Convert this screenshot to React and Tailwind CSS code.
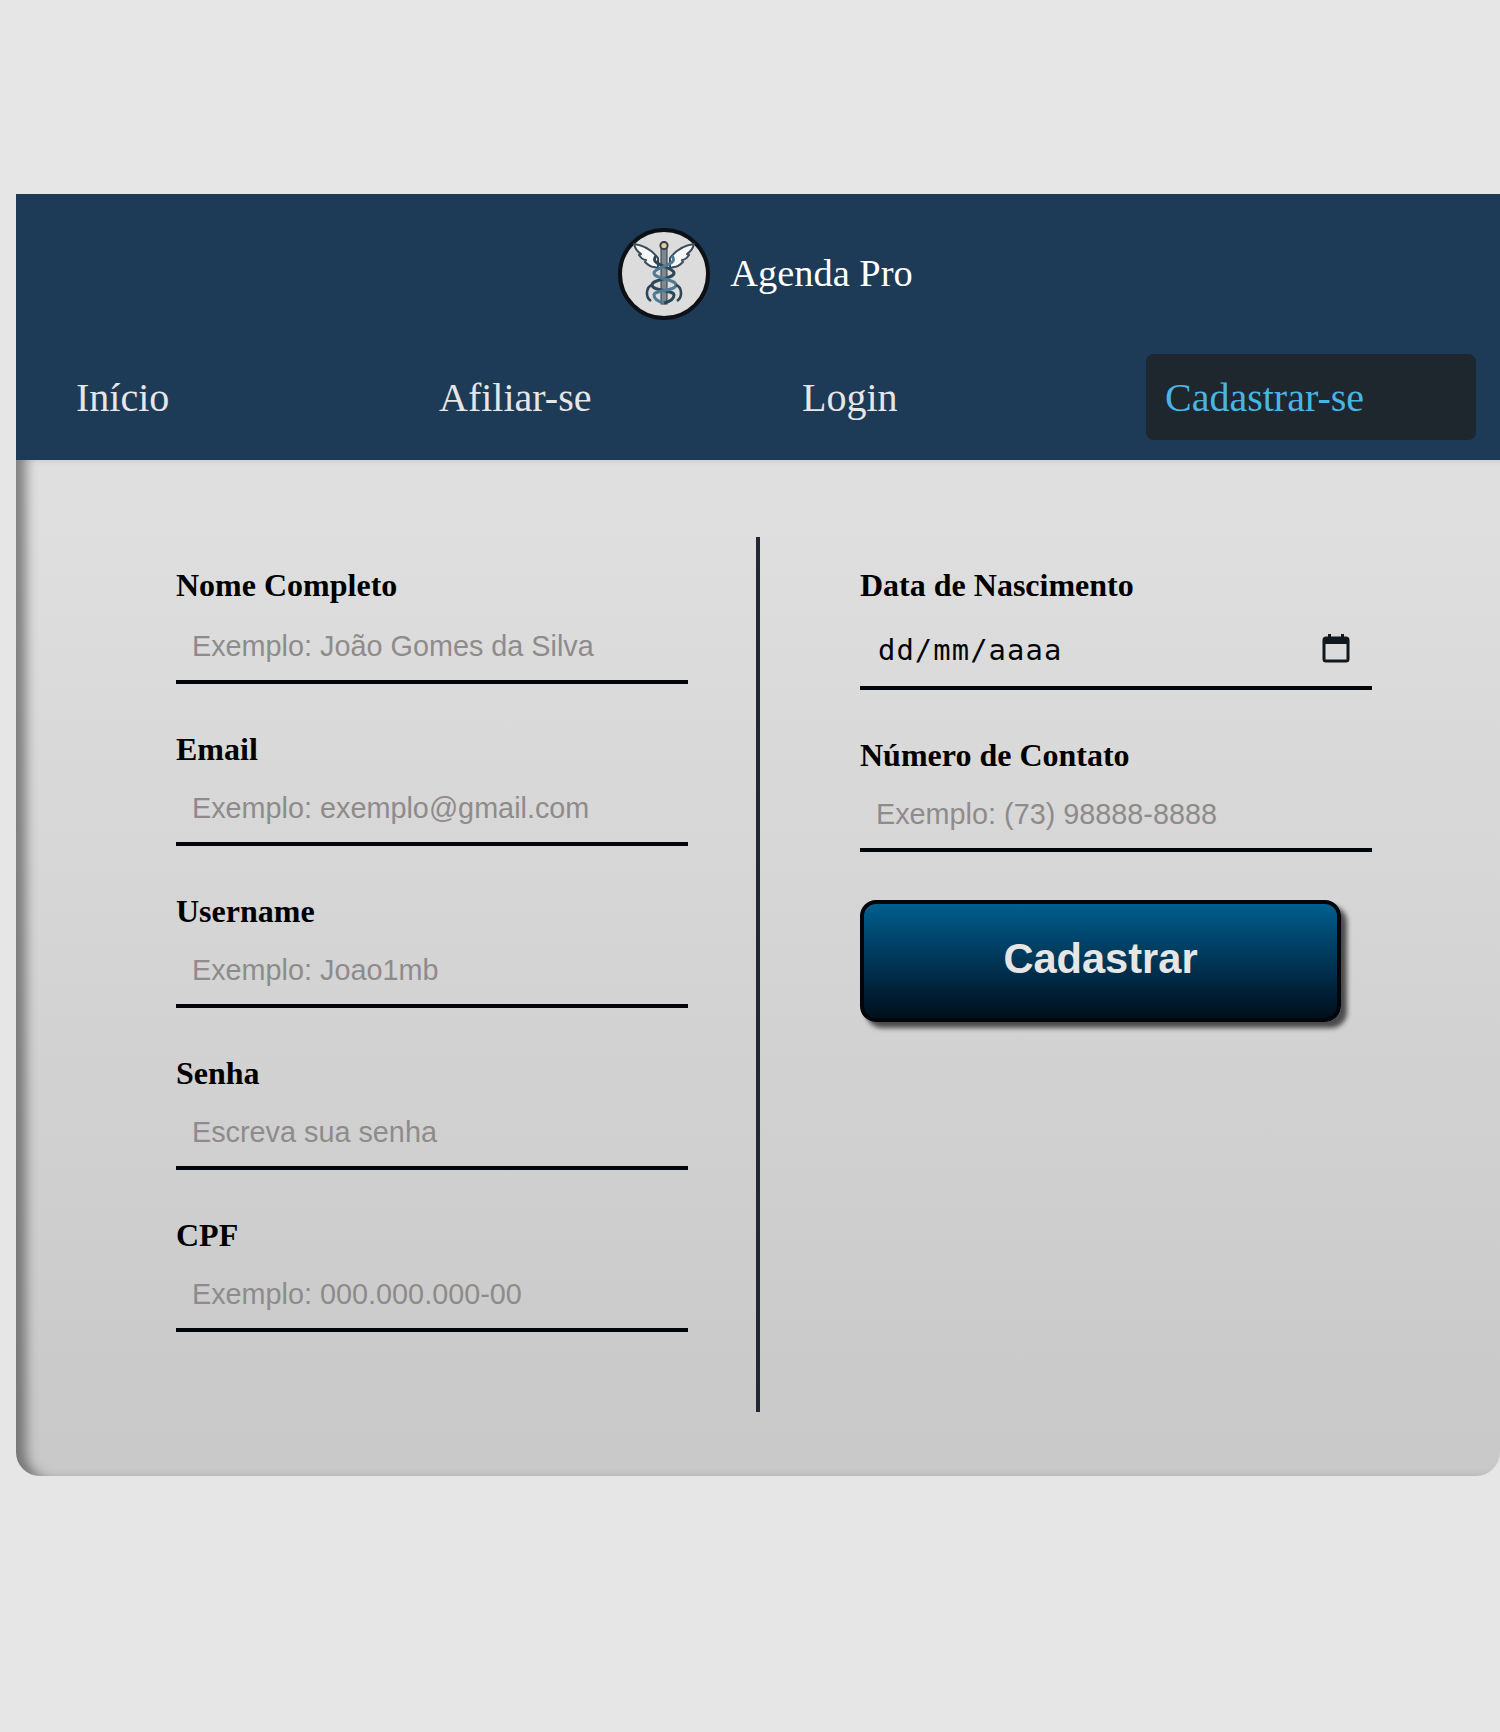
import React from 'react';

const navItems = [
  { label: 'Início' },
  { label: 'Afiliar-se' },
  { label: 'Login' },
  { label: 'Cadastrar-se', active: true },
];

const leftFields = [
  { label: 'Nome Completo', placeholder: 'Exemplo: João Gomes da Silva', tall: true },
  { label: 'Email', placeholder: 'Exemplo: exemplo@gmail.com' },
  { label: 'Username', placeholder: 'Exemplo: Joao1mb' },
  { label: 'Senha', placeholder: 'Escreva sua senha' },
  { label: 'CPF', placeholder: 'Exemplo: 000.000.000-00' },
];

// Caduceus drawn by hand, the logo has no icon in the packages
const Logo = () => (
  <div className="flex h-[92px] w-[92px] shrink-0 items-center justify-center rounded-full border-4 border-[#0d1014] bg-[#dcdcdc]">
    <svg width="62" height="64" viewBox="0 0 62 64" fill="none" className="-mt-[2px]">
      {/* wings */}
      <path d="M25 17 C18 8 10 4 1 3 C2 8 5 11 8 13 L6 14 C8 17 10 19 13 19 L12 21 C15 24 18 26 21 26 L25 27 Z" fill="#f6f6f6" stroke="#3a4c5a" strokeWidth="2" strokeLinejoin="round" />
      <path d="M37 17 C44 8 52 4 61 3 C60 8 57 11 54 13 L56 14 C54 17 52 19 49 19 L50 21 C47 24 44 26 41 26 L37 27 Z" fill="#f6f6f6" stroke="#3a4c5a" strokeWidth="2" strokeLinejoin="round" />
      {/* staff and ball */}
      <rect x="28" y="7" width="6" height="56" fill="#7f8890" stroke="#2d3b46" strokeWidth="1" />
      <circle cx="31" cy="4.5" r="3.6" fill="#e9c79a" stroke="#33414d" strokeWidth="2" />
      {/* snakes */}
      <path d="M23 15 C15 24 41 26 41 32 C41 38 19 38 19 44 C19 50 41 49 41 54 C41 59 35 61 31 62" stroke="#2c4557" strokeWidth="3" />
      <path d="M39 15 C47 24 21 26 21 32 C21 38 43 38 43 44 C43 50 21 49 21 54 C21 59 27 61 31 62" stroke="#4f7a94" strokeWidth="3" />
      <path d="M19 44 C13 46 12 56 18 60 M43 44 C49 46 50 56 44 60" stroke="#2c4557" strokeWidth="2.6" />
    </svg>
  </div>
);

const Field = ({ label, placeholder, tall }) => (
  <div className="mb-[47px] flex flex-col">
    <label className="h-[37px] text-[32px] leading-[37px] font-bold text-black">{label}</label>
    <input
      type="text"
      placeholder={placeholder}
      className={`w-full border-b-4 border-[#02060a] bg-transparent px-4 text-[28.8px] outline-none placeholder:text-[#8f8b8b] [font-family:'Liberation_Sans',Arial,sans-serif] ${
        tall ? 'h-[80px] pt-2' : 'h-[78px] pt-[6px]'
      }`}
    />
  </div>
);

const DateField = () => (
  <div className="mb-[47px] flex flex-col">
    <label className="h-[37px] text-[32px] leading-[37px] font-bold text-black">Data de Nascimento</label>
    <div className="flex h-[86px] items-center justify-between border-b-4 border-[#02060a] pt-[11px] pr-[22px] pl-[18px]">
      <span className="text-[28.8px] tracking-[1.1px] text-[#02060a] [font-family:'DejaVu_Sans_Mono',monospace]">dd/mm/aaaa</span>
      <svg width="28" height="30" viewBox="0 0 28 30" fill="none" className="mb-[6px]">
        <rect x="2" y="5" width="24" height="23" rx="2" stroke="#10181f" strokeWidth="3" />
        <rect x="2" y="5" width="24" height="6" fill="#10181f" />
        <rect x="6" y="1" width="3" height="6" fill="#10181f" />
        <rect x="19" y="1" width="3" height="6" fill="#10181f" />
      </svg>
    </div>
  </div>
);

export default function App() {
  return (
    <div className="min-h-screen bg-[#e6e6e6] pt-[194px] pl-4 [font-family:'Liberation_Serif','Times_New_Roman',serif]">
      <div className="flex flex-col">
        {/* Header */}
        <header className="h-[266px] bg-[#1d3a56] pt-[34px] pr-6 pl-[41px]">
          <div className="flex items-center justify-center gap-5 pr-[2px]">
            <Logo />
            <span className="text-[38.4px] text-white">Agenda Pro</span>
          </div>
          <nav className="mt-[34px] grid grid-cols-4 gap-[33px]">
            {navItems.map((item) => (
              <a
                key={item.label}
                className={`flex h-[86px] items-center rounded-lg px-[19px] pt-[2px] text-[40px] ${
                  item.active ? 'bg-[#1e262e] text-[#48b6e4]' : 'text-[#e6e6e6]'
                }`}
              >
                {item.label}
              </a>
            ))}
          </nav>
        </header>

        {/* Form */}
        <main className="flex h-[1016px] rounded-b-[24px] bg-gradient-to-b from-[#e0e0e0] to-[#c8c8c8] pt-[77px] pl-[160px] shadow-[inset_16px_0_12px_-6px_rgba(0,0,0,0.42)]">
          <div className="h-[875px] w-[512px] pt-[30px]">
            {leftFields.map((field) => (
              <Field key={field.label} {...field} />
            ))}
          </div>
          <div className="ml-[68px] h-[875px] w-1 bg-[#1f2933]" />
          <div className="ml-[100px] h-[875px] w-[512px] pt-[30px]">
            <DateField />
            <Field label="Número de Contato" placeholder="Exemplo: (73) 98888-8888" />
            <button className="mt-[1px] h-[122px] w-[481px] rounded-2xl border-4 border-[#02060a] bg-gradient-to-b from-[#005f8f] via-[#002a46] via-65% to-[#00101c] pb-1 text-[41.6px] font-bold text-[#e6e6e6] shadow-[6px_6px_5px_rgba(0,0,0,0.65)] [font-family:'Liberation_Sans',Arial,sans-serif]">
              Cadastrar
            </button>
          </div>
        </main>
      </div>
    </div>
  );
}
